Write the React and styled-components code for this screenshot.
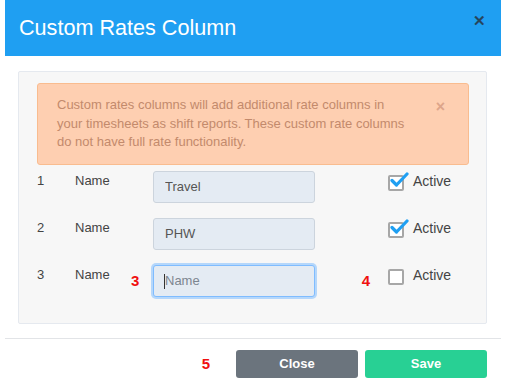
import React from 'react';
import styled, { createGlobalStyle } from 'styled-components';

const GlobalStyle = createGlobalStyle`
  body {
    margin: 0;
    background: #fff;
    font-family: "Liberation Sans", Arial, sans-serif;
  }
`;

const Modal = styled.div`
  width: 496px;
  margin-left: 5px;
  background: #fff;
`;

const Header = styled.div`
  height: 56px;
  background-color: #1f9ff2;
  display: flex;
  align-items: center;
  justify-content: space-between;
  padding: 0 15px 0 14px;
  box-sizing: border-box;
`;

const Title = styled.h4`
  margin: 0;
  margin-top: -1px;
  color: #fff;
  font-size: 21.6px;
  font-weight: 400;
`;

const HeaderClose = styled.button`
  border: none;
  background: none;
  padding: 0;
  margin-top: -16px;
  color: #27465c;
  font-size: 15px;
  font-weight: 700;
  line-height: 1;
  cursor: pointer;
`;

const Body = styled.div`
  padding: 15px 14px 14px 13px;
`;

const Panel = styled.div`
  background: #f7f7f7;
  border: 1px solid #e5e9ef;
  border-radius: 2px;
  padding: 11px 17px 26px 18px;
`;

const Alert = styled.div`
  display: flex;
  justify-content: space-between;
  background: #fecfb1;
  border: 1px solid #f9bc8f;
  border-radius: 3px;
  padding: 12px 23px 12px 19px;
  color: #c38a6c;
  font-size: 13px;
  line-height: 18.6px;
`;

const AlertText = styled.p`
  margin: 0;
  width: 350px;
`;

const AlertClose = styled.span`
  color: #dda58a;
  font-size: 16px;
  font-weight: 700;
  line-height: 1;
  margin-top: 3px;
`;

const Rows = styled.div`
  display: flex;
  flex-direction: column;
  gap: 15px;
  margin-top: 6px;
`;

const Row = styled.div`
  display: grid;
  grid-template-columns: 38px 56px 22px 162px 73px 25px auto;
  align-items: start;
  color: #444;
  font-size: 13px;
`;

const Cell = styled.span`
  padding-top: 2px;
  line-height: 16px;
`;

const Marker = styled.span`
  color: #f01010;
  font-weight: 700;
  font-size: 15px;
  line-height: 16px;
  padding-top: 8px;
`;

const EndMarker = styled(Marker)`
  text-align: right;
  padding-right: 18px;
`;

const FieldWrap = styled.div`
  position: relative;
`;

const Field = styled.input`
  width: 162px;
  height: 32px;
  box-sizing: border-box;
  background: #e4ebf3;
  border: 1px solid ${({ $focused }) => ($focused ? '#7fbcff' : '#ccd4dd')};
  box-shadow: ${({ $focused }) => ($focused ? '0 0 0 2px rgba(128, 189, 255, 0.55)' : 'none')};
  border-radius: 3px;
  padding: 0 11px;
  font-family: inherit;
  font-size: 13px;
  color: #555;
  outline: none;

  &::placeholder {
    color: #7d8690;
  }
`;

const Caret = styled.span`
  position: absolute;
  left: 11px;
  top: 9px;
  width: 1px;
  height: 15px;
  background: #333;
`;

const CheckBox = styled.span`
  position: relative;
  display: block;
  width: 12px;
  height: 12px;
  margin-top: 4px;
  border: 2px solid #a7a7a7;
  border-radius: 2px;
  background: #fff;

  svg {
    position: absolute;
    left: 0px;
    top: -5px;
  }
`;

const ActiveLabel = styled(Cell)`
  font-size: 14px;
`;

const Footer = styled.div`
  border-top: 1px solid #e2e4e7;
  display: flex;
  align-items: center;
  justify-content: flex-end;
  padding: 11px 14px 8px 0;
  gap: 7px;
`;

const FooterMarker = styled(Marker)`
  padding-top: 0;
  margin-right: 19px;
`;

const Button = styled.button`
  width: 122px;
  height: 28px;
  border: none;
  border-radius: 3px;
  background: ${({ $tone }) => $tone};
  color: #fff;
  font-family: inherit;
  font-size: 13px;
  font-weight: 700;
  cursor: pointer;
`;

const Check = () => (
  <svg width="20" height="16" viewBox="0 0 20 16">
    <path d="M2 8.5 L6.5 13 L17 2" fill="none" stroke="#1f9ff2" strokeWidth="3.2" strokeLinecap="round" strokeLinejoin="round" />
  </svg>
);

const rows = [
  { n: 1, value: 'Travel', active: true },
  { n: 2, value: 'PHW', active: true },
  { n: 3, value: '', active: false, focused: true, marks: true },
];

export default function App() {
  return (
    <>
      <GlobalStyle />
      <Modal>
        <Header>
          <Title>Custom Rates Column</Title>
          <HeaderClose>✕</HeaderClose>
        </Header>
        <Body>
          <Panel>
            <Alert>
              <AlertText>
                Custom rates columns will add additional rate columns in your timesheets as shift reports. These custom rate columns do not have full rate functionality.
              </AlertText>
              <AlertClose>×</AlertClose>
            </Alert>
            <Rows>
              {rows.map((r) => (
                <Row key={r.n}>
                  <Cell>{r.n}</Cell>
                  <Cell>Name</Cell>
                  <Marker>{r.marks ? '3' : ''}</Marker>
                  <FieldWrap>
                    <Field defaultValue={r.value} placeholder="Name" $focused={r.focused} readOnly />
                    {r.focused && <Caret />}
                  </FieldWrap>
                  <EndMarker>{r.marks ? '4' : ''}</EndMarker>
                  <CheckBox>{r.active && <Check />}</CheckBox>
                  <ActiveLabel>Active</ActiveLabel>
                </Row>
              ))}
            </Rows>
          </Panel>
        </Body>
        <Footer>
          <FooterMarker>5</FooterMarker>
          <Button $tone="#6b747d">Close</Button>
          <Button $tone="#28d094">Save</Button>
        </Footer>
      </Modal>
    </>
  );
}
